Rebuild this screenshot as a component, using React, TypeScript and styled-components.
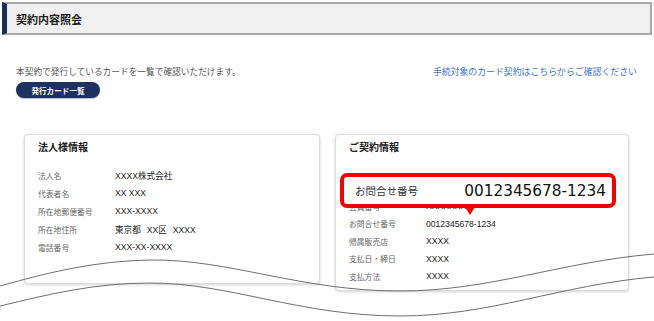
import React from "react";
import styled, { createGlobalStyle } from "styled-components";

const GlobalStyle = createGlobalStyle`
    html, body {
        margin: 0;
        padding: 0;
        background: #ffffff;
    }
    body {
        font-family: "Noto Sans CJK JP", "Liberation Sans", sans-serif;
        color: #222;
    }
`;

const jp = `"Liberation Sans", "Noto Sans CJK JP", sans-serif`;

const StyledPage = styled.div`
    position: relative;
    width: 654px;
    height: 321px;
    padding: 2px 2px 0 2px;
    box-sizing: border-box;
    overflow: hidden;
`;

const StyledHeader = styled.div`
    height: 33px;
    box-sizing: border-box;
    display: flex;
    align-items: center;
    padding-left: 9px;
    background: #f0f0f0;
    border: 2px solid #a9a9a9;
    border-left: 5px solid #1c2b57;
    font-family: ${jp};
    font-size: 11px;
    font-weight: bold;
    color: #222;
`;

const StyledIntro = styled.div`
    display: flex;
    justify-content: space-between;
    align-items: flex-start;
    margin-top: 30px;
    padding: 0 15px 0 14px;
`;

const StyledLead = styled.div`
    display: flex;
    flex-direction: column;
    align-items: flex-start;
`;

const StyledText = styled.p`
    margin: 0;
    line-height: 14px;
    font-family: ${jp};
    font-size: 8.7px;
    color: #555;
`;

const StyledButton = styled.button`
    margin-top: 3px;
    width: 84px;
    height: 16px;
    padding: 0;
    border: none;
    border-radius: 8px;
    background: #1e3262;
    box-shadow: 0 1px 1px rgba(0, 0, 0, 0.25);
    color: #fff;
    font-family: ${jp};
    font-size: 7.6px;
    font-weight: bold;
`;

const StyledLink = styled.a`
    line-height: 14px;
    font-family: ${jp};
    font-size: 8.9px;
    color: #3f72cf;
    text-decoration: none;
`;

const StyledCards = styled.div`
    display: flex;
    gap: 15px;
    margin-top: 36px;
    padding-left: 22px;
`;

const StyledCard = styled.section<{ $width: number; $height: number }>`
    position: relative;
    width: ${props => props.$width}px;
    height: ${props => props.$height}px;
    box-sizing: border-box;
    padding: 6px 13px;
    background: #fff;
    border: 1px solid #dcdcdc;
    border-radius: 4px;
    box-shadow: 0 1px 3px rgba(0, 0, 0, 0.18);
`;

const StyledCardTitle = styled.h2`
    margin: 0;
    line-height: 14px;
    font-family: ${jp};
    font-size: 10px;
    font-weight: bold;
    color: #222;
`;

const StyledRows = styled.dl<{ $top: number; $row: number }>`
    margin: ${props => props.$top}px 0 0 0;
    display: grid;
    grid-template-columns: 77px 1fr;
    grid-auto-rows: ${props => props.$row}px;
    align-items: center;
`;

const StyledLabel = styled.dt`
    font-family: ${jp};
    font-size: 7.8px;
    color: #666;
`;

const StyledValue = styled.dd`
    margin: 0;
    font-family: ${jp};
    font-size: 8.6px;
    color: #222;
`;

const StyledCallout = styled.div`
    position: absolute;
    left: 4px;
    top: 38px;
    width: 276px;
    height: 35px;
    box-sizing: border-box;
    display: flex;
    justify-content: space-between;
    align-items: center;
    padding: 0 6px 0 11px;
    background: #fff;
    border: 4px solid #f00000;
    border-radius: 7px;

    &::after {
        content: "";
        position: absolute;
        left: 121px;
        top: calc(100% + 3px);
        border-left: 5px solid transparent;
        border-right: 5px solid transparent;
        border-top: 8px solid #f00000;
    }
`;

const StyledCalloutLabel = styled.span`
    font-family: ${jp};
    font-size: 10.5px;
    color: #333;
`;

const StyledCalloutNumber = styled.span`
    font-family: "DejaVu Sans", sans-serif;
    font-size: 15.3px;
    color: #111;
`;

const StyledWave = styled.svg`
    position: absolute;
    left: 0;
    top: 0;
    pointer-events: none;
`;

const corporate = [
    ["法人名", "XXXX株式会社"],
    ["代表者名", "XX XXX"],
    ["所在地郵便番号", "XXX-XXXX"],
    ["所在地住所", "東京都\u2002\u2009XX区\u2002\u2009XXXX"],
    ["電話番号", "XXX-XX-XXXX"],
];

// the first two rows sit under the callout
const contract = [
    ["契約番号", "XXXXXXXX"],
    ["会員番号", "XXXXXXXX"],
    ["お問合せ番号", "0012345678-1234"],
    ["帰属販売店", "XXXX"],
    ["支払日・締日", "XXXX"],
    ["支払方法", "XXXX"],
];

export default function App() {
    return (
        <StyledPage>
            <GlobalStyle/>
            <StyledHeader>契約内容照会</StyledHeader>

            <StyledIntro>
                <StyledLead>
                    <StyledText>本契約で発行しているカードを一覧で確認いただけます。</StyledText>
                    <StyledButton>発行カード一覧</StyledButton>
                </StyledLead>
                <StyledLink href="#">手続対象のカード契約はこちらからご確認ください</StyledLink>
            </StyledIntro>

            <StyledCards>
                <StyledCard $width={296} $height={150}>
                    <StyledCardTitle>法人様情報</StyledCardTitle>
                    <StyledRows $top={11} $row={18}>
                        {corporate.map(([label, value]) => (
                            <React.Fragment key={label}>
                                <StyledLabel>{label}</StyledLabel>
                                <StyledValue>{value}</StyledValue>
                            </React.Fragment>
                        ))}
                    </StyledRows>
                </StyledCard>

                <StyledCard $width={294} $height={157}>
                    <StyledCardTitle>ご契約情報</StyledCardTitle>
                    <StyledRows $top={25} $row={17.5}>
                        {contract.map(([label, value]) => (
                            <React.Fragment key={label}>
                                <StyledLabel>{label}</StyledLabel>
                                <StyledValue>{value}</StyledValue>
                            </React.Fragment>
                        ))}
                    </StyledRows>
                    <StyledCallout>
                        <StyledCalloutLabel>お問合せ番号</StyledCalloutLabel>
                        <StyledCalloutNumber>0012345678-1234</StyledCalloutNumber>
                    </StyledCallout>
                </StyledCard>
            </StyledCards>

            <StyledWave width="654" height="321" viewBox="0 0 654 321">
                <path d="M0,286 C50,272 95,261 150,260 C230,259 300,291 400,291 C490,291 560,262 654,254"
                      fill="none" stroke="#6f6f6f" strokeWidth="1"/>
                <path d="M0,306 C50,294 95,283 150,283 C230,283 300,316 400,316 C490,316 560,285 654,277"
                      fill="none" stroke="#6f6f6f" strokeWidth="1"/>
            </StyledWave>
        </StyledPage>
    );
}
